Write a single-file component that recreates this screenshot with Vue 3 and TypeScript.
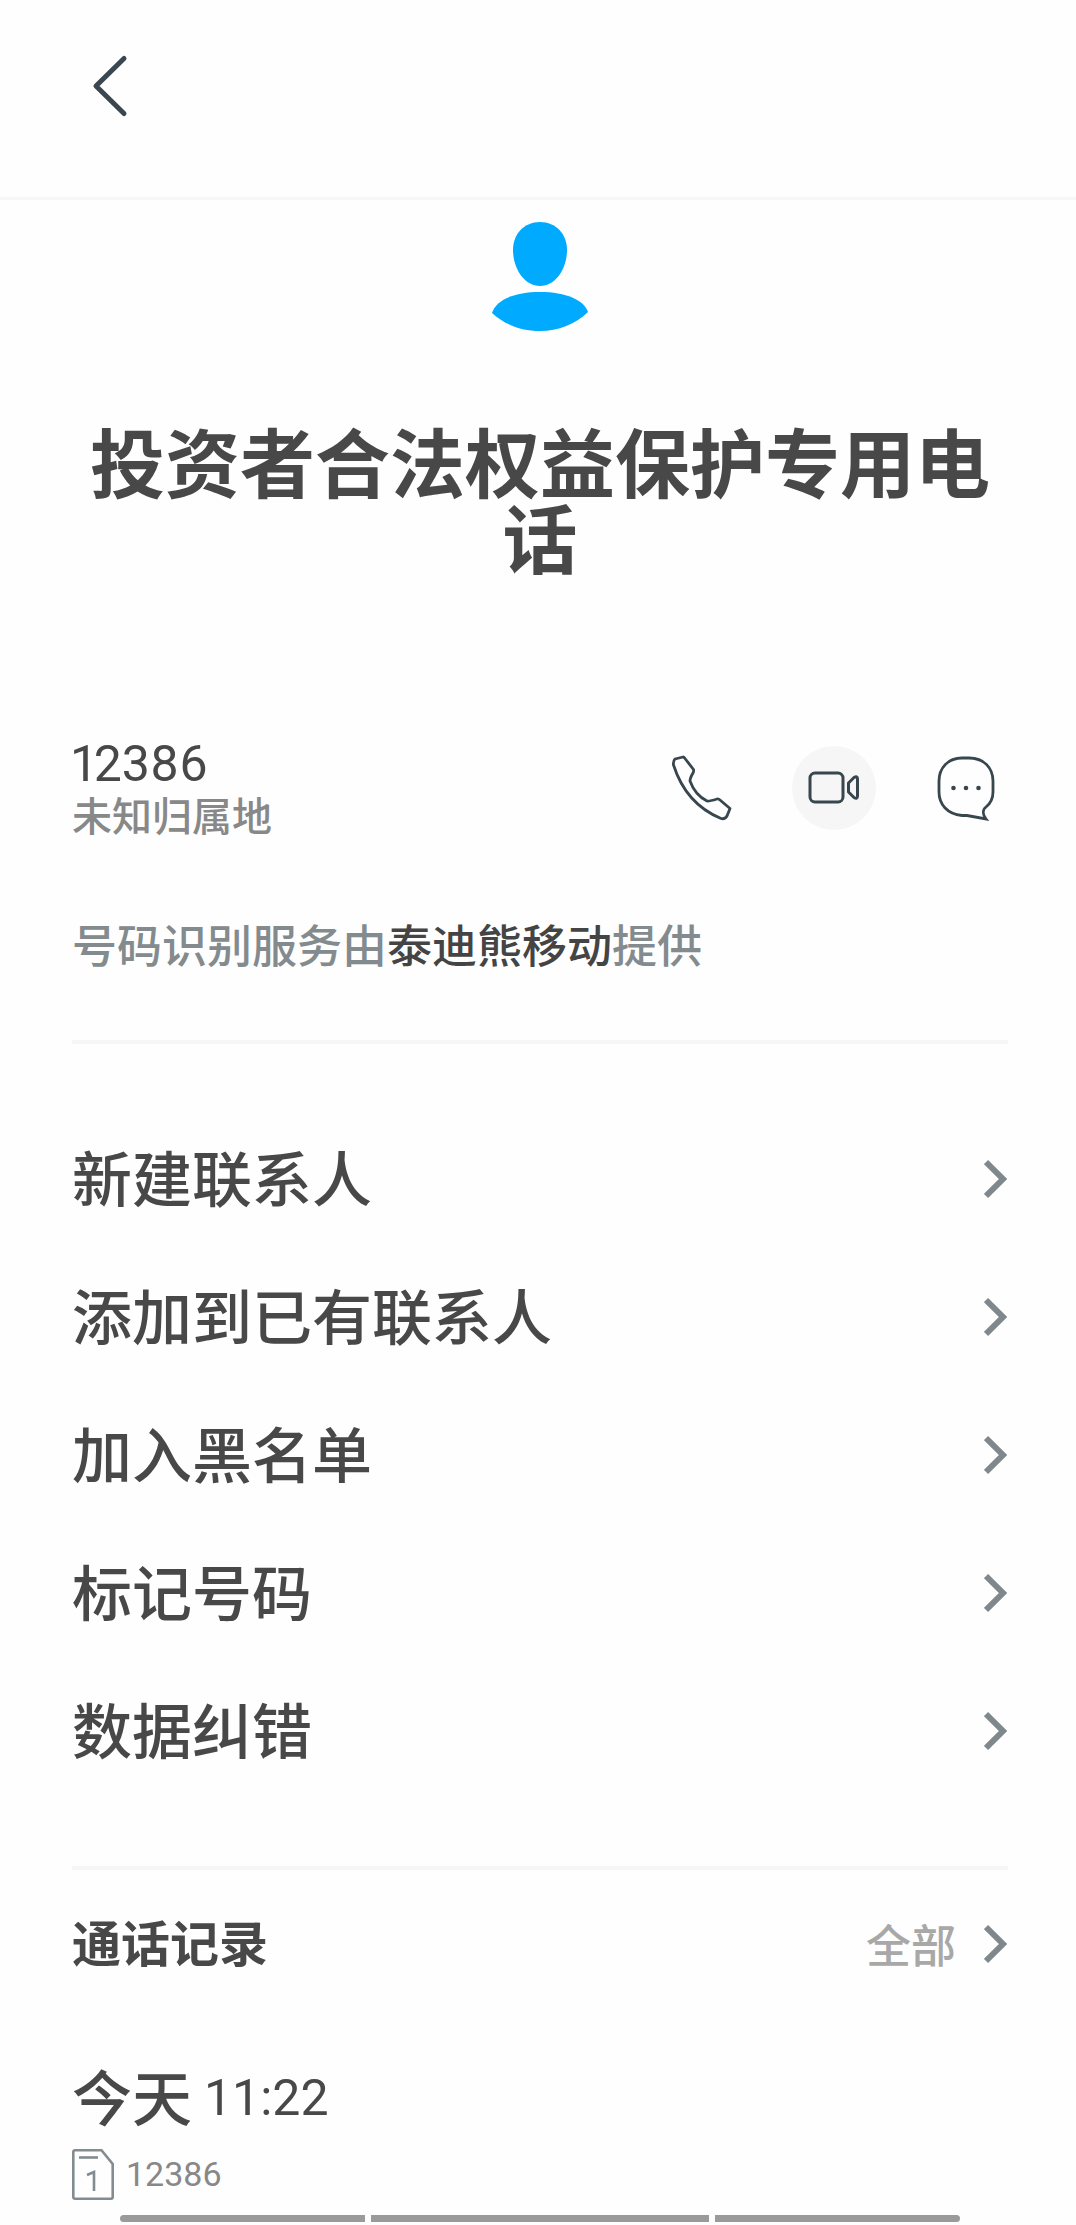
<script setup lang="ts">
interface Action {
  label: string
  href: string
}

const actions: Action[] = [
  { label: '新建联系人', href: '#new' },
  { label: '添加到已有联系人', href: '#existing' },
  { label: '加入黑名单', href: '#block' },
  { label: '标记号码', href: '#mark' },
  { label: '数据纠错', href: '#correct' },
]

const phone = '12386'
</script>

<template>
  <div class="page">
    <header class="topbar">
      <button class="icon-button" type="button" aria-label="返回">
        <svg width="36" height="64" viewBox="0 0 36 64" aria-hidden="true">
          <path d="M32 4.500 L4 32 L32 59.500" fill="none" stroke="#3a4650" stroke-width="5" stroke-linecap="round" stroke-linejoin="round" />
        </svg>
      </button>
    </header>

    <main class="content">
      <section class="profile">
        <svg class="avatar" width="96" height="110" viewBox="0 0 96 110" aria-hidden="true">
          <path d="M48 0 C64 0 75 12 75 28 C75 46 64 64 48 64 C32 64 21 46 21 28 C21 12 32 0 48 0Z" fill="#00aaff" />
          <path d="M0 91 C4 78 22 70 48 70 C74 70 92 78 96 90 C84 102 66 109 48 109 C28 109 12 102 0 91Z" fill="#00aaff" />
        </svg>
        <h1 class="name">投资者合法权益保护专用电话</h1>
      </section>

      <section class="number-row">
        <div class="number-info">
          <p class="number">{{ phone }}</p>
          <p class="location">未知归属地</p>
        </div>
        <div class="contact-buttons">
          <button class="round" type="button" aria-label="拨打电话">
            <svg width="64" height="68" viewBox="0 0 64 68" fill="none" stroke="#38464d" stroke-width="2.800" stroke-linejoin="round" aria-hidden="true">
              <path d="M5 5 L13 3 Q14 3 15 4.500 L23.500 15.500 Q24 17 23 19 Q20 24 20 27 Q25 41 37 47 Q39 47.500 47 45 Q48.500 44.500 50 46 L60 54.500 L57 62 Q55 65.500 51 64.500 Q16 50 3.500 11 Q3 7 5 5Z" />
            </svg>
          </button>
          <button class="round filled" type="button" aria-label="视频通话">
            <svg width="52" height="34" viewBox="0 0 52 34" fill="none" stroke="#38464d" stroke-width="3" stroke-linejoin="round" aria-hidden="true">
              <rect x="2" y="2" width="33" height="29" rx="5" />
              <path d="M40.500 12 L46 6.500 Q49.500 4.500 49.500 8 V25 Q49.500 28.500 46 26.500 L40.500 21Z" />
            </svg>
          </button>
          <button class="round" type="button" aria-label="发送短信">
            <svg width="60" height="66" viewBox="0 0 60 66" fill="none" stroke="#38464d" stroke-width="2.800" aria-hidden="true">
              <path d="M26 3 H33 C48 3 57 13 57 26 V37 C57 44 55 48 50 52 C46 55 47 60 50 64 L31 60.500 H26 C11 59 3 49 3 37 V26 C3 13 12 3 26 3Z" />
              <g fill="#38464d" stroke="none">
                <circle cx="17.500" cy="33" r="2.300" />
                <circle cx="30" cy="33" r="2.300" />
                <circle cx="42.500" cy="33" r="2.300" />
              </g>
            </svg>
          </button>
        </div>
      </section>

      <p class="provider">号码识别服务由<strong>泰迪熊移动</strong>提供</p>

      <nav class="actions">
        <a v-for="item in actions" :key="item.href" class="action" :href="item.href">
          <span class="label">{{ item.label }}</span>
          <svg width="24" height="40" viewBox="0 0 24 40" aria-hidden="true">
            <path d="M2 3 L19 20 L2 37" fill="none" stroke="#7f898d" stroke-width="6" />
          </svg>
        </a>
      </nav>

      <section class="history">
        <div class="history-head">
          <h2 class="label">通话记录</h2>
          <a class="all" href="#all">
            <span>全部</span>
            <svg width="24" height="40" viewBox="0 0 24 40" aria-hidden="true">
              <path d="M2 3 L19 20 L2 37" fill="none" stroke="#7f898d" stroke-width="6" />
            </svg>
          </a>
        </div>
        <p class="call-time">
          <span class="label">今天</span>
          <span class="time">11:22</span>
        </p>
        <p class="call-line">
          <svg width="42" height="51" viewBox="0 0 42 51" fill="none" stroke="#838d91" stroke-width="2.600" aria-hidden="true">
            <path d="M3 1.300 H29.500 L40.700 15 V48 Q40.700 49.700 39 49.700 H3 Q1.300 49.700 1.300 48 V3 Q1.300 1.300 3 1.300Z" />
            <path d="M7 8.500 H26" />
            <path d="M15 26 L22 23 V42" />
          </svg>
          <span>{{ phone }}</span>
        </p>
      </section>
    </main>

    <footer class="gesture" aria-hidden="true">
      <span class="side left"></span>
      <span class="middle"></span>
      <span class="side right"></span>
    </footer>
  </div>
</template>

<style>
body {
  margin: 0;
  background: #fefefe;
}
</style>

<style scoped>
.page {
  color: #484848;
  font-family: "Noto Sans CJK SC", sans-serif;
}

h1,
h2,
p {
  margin: 0;
}

button {
  padding: 0;
  border: 0;
  background: none;
}

a {
  color: inherit;
  text-decoration: none;
}

svg {
  display: block;
  flex: none;
}

.label {
  padding-bottom: 6px;
}

.topbar {
  padding: 54px 92px 79px;
  border-bottom: 3px solid #f7f7f7;
}

.icon-button {
  display: block;
}

.content {
  padding: 0 68px 0 72px;
}

.profile {
  display: flex;
  flex-direction: column;
  align-items: center;
  padding: 22px 12px 0;
}

.name {
  margin-top: 90px;
  font-size: 75px;
  line-height: 76px;
  font-weight: 700;
  text-align: center;
}

.number-row {
  display: flex;
  align-items: center;
  justify-content: space-between;
  margin-top: 160px;
}

.number {
  font-family: Roboto, sans-serif;
  font-size: 50px;
  line-height: 60px;
  font-variant-numeric: proportional-nums;
}

.location {
  color: #888;
  font-family: Roboto, "Noto Sans CJK SC", sans-serif;
  font-size: 40px;
  line-height: 48px;
  font-weight: 500;
}

.contact-buttons {
  display: flex;
  gap: 48px;
}

.round {
  display: flex;
  align-items: center;
  justify-content: center;
  width: 84px;
  height: 84px;
  border-radius: 50%;
}

.filled {
  background: #f6f6f7;
}

.provider {
  margin-top: 72px;
  color: #838b8e;
  font-size: 45px;
  line-height: 60px;
  font-weight: 500;
}

.provider strong {
  color: #444;
  font-weight: 500;
}

.actions {
  margin-top: 66px;
  padding: 66px 0;
  border-top: 4px solid #f6f6f6;
  border-bottom: 4px solid #f6f6f6;
}

.action {
  display: flex;
  align-items: center;
  justify-content: space-between;
  height: 138px;
  font-size: 60px;
  line-height: 80px;
  font-weight: 500;
}

.history-head {
  display: flex;
  align-items: center;
  justify-content: space-between;
  margin-top: 41px;
}

.history-head h2 {
  font-size: 49px;
  line-height: 60px;
  font-weight: 700;
}

.all {
  display: flex;
  align-items: center;
  gap: 28px;
  color: #a8a8a8;
  font-size: 45px;
  line-height: 60px;
  font-weight: 500;
}

.call-time {
  display: flex;
  align-items: center;
  gap: 12px;
  margin-top: 78px;
  font-size: 60px;
  line-height: 80px;
  font-weight: 500;
}

.time {
  font-family: Roboto, sans-serif;
  font-size: 50px;
  font-weight: 400;
}

.call-line {
  display: flex;
  align-items: center;
  gap: 12px;
  margin-top: 8px;
  color: #888;
  font-family: Roboto, sans-serif;
  font-size: 34px;
  line-height: 51px;
}

.gesture {
  display: flex;
  gap: 6px;
  padding: 15px 116px 3px 120px;
}

.gesture span {
  height: 7px;
  background: #9a9a9a;
}

.side {
  flex: 245;
}

.middle {
  flex: 338;
}

.left {
  border-radius: 4px 0 0 4px;
}

.right {
  border-radius: 0 4px 4px 0;
}
</style>
